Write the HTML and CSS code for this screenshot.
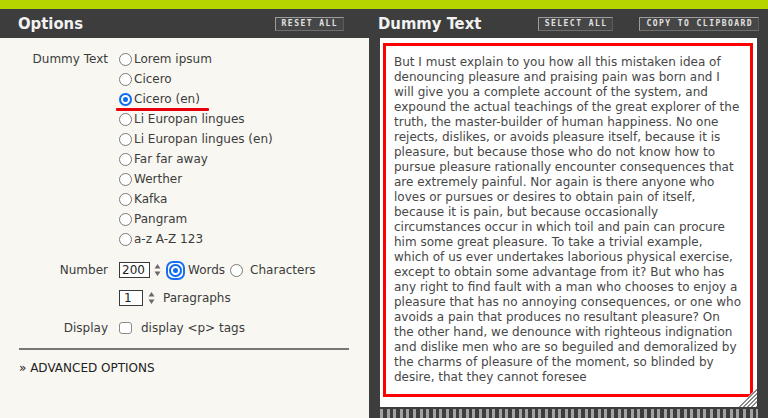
FILE: index.html
```html
<!DOCTYPE html>
<html lang="en">
<head>
<meta charset="utf-8">
<title>Dummy Text Generator</title>
<link rel="stylesheet" href="styles.css">
</head>
<body>
<div class="topbar"></div>
<div class="app">
  <section class="left">
    <header class="bar">
      <h1 class="title">Options</h1>
      <button class="pbtn reset">RESET ALL</button>
    </header>
    <div class="panel">
      <div class="field">
        <div class="lbl">Dummy Text</div>
        <div class="opts">
          <label class="opt"><span class="radio"></span>Lorem ipsum</label>
          <label class="opt"><span class="radio"></span>Cicero</label>
          <label class="opt marked"><span class="radio on"></span>Cicero (en)</label>
          <label class="opt"><span class="radio"></span>Li Europan lingues</label>
          <label class="opt"><span class="radio"></span>Li Europan lingues (en)</label>
          <label class="opt"><span class="radio"></span>Far far away</label>
          <label class="opt"><span class="radio"></span>Werther</label>
          <label class="opt"><span class="radio"></span>Kafka</label>
          <label class="opt"><span class="radio"></span>Pangram</label>
          <label class="opt"><span class="radio"></span>a-z A-Z 123</label>
        </div>
      </div>
      <div class="field num">
        <div class="lbl">Number</div>
        <div class="ctrls">
          <span class="box w3">200</span>
          <svg class="spin" width="7" height="14" viewBox="0 0 7 14"><path d="M3.5 1 L6.5 5.5 H0.5 Z M3.5 13 L6.5 8.5 H0.5 Z" fill="#6a6a6a"/></svg>
          <span class="focus"><span class="radio on"></span></span>
          <span class="t-words">Words</span>
          <span class="radio r-chars"></span>
          <span class="t-chars">Characters</span>
        </div>
      </div>
      <div class="field para">
        <div class="lbl"></div>
        <div class="ctrls">
          <span class="box w1">1</span>
          <svg class="spin sp2" width="7" height="14" viewBox="0 0 7 14"><path d="M3.5 1 L6.5 5.5 H0.5 Z M3.5 13 L6.5 8.5 H0.5 Z" fill="#6a6a6a"/></svg>
          <span class="t-para">Paragraphs</span>
        </div>
      </div>
      <div class="field disp">
        <div class="lbl">Display</div>
        <div class="ctrls">
          <span class="check"></span>
          <span class="t-disp">display &lt;p&gt; tags</span>
        </div>
      </div>
      <hr class="rule">
      <div class="adv">» ADVANCED OPTIONS</div>
    </div>
  </section>
  <section class="right">
    <header class="bar">
      <h1 class="title dt">Dummy Text</h1>
      <div class="btns">
        <button class="pbtn">SELECT ALL</button>
        <button class="pbtn">COPY TO CLIPBOARD</button>
      </div>
    </header>
    <div class="paper">
      <div class="frame">
        <div class="txt">But I must explain to you how all this mistaken idea of<br>denouncing pleasure and praising pain was born and I<br>will give you a complete account of the system, and<br>expound the actual teachings of the great explorer of the<br>truth, the master-builder of human happiness. No one<br>rejects, dislikes, or avoids pleasure itself, because it is<br>pleasure, but because those who do not know how to<br>pursue pleasure rationally encounter consequences that<br>are extremely painful. Nor again is there anyone who<br>loves or pursues or desires to obtain pain of itself,<br>because it is pain, but because occasionally<br>circumstances occur in which toil and pain can procure<br>him some great pleasure. To take a trivial example,<br>which of us ever undertakes laborious physical exercise,<br>except to obtain some advantage from it? But who has<br>any right to find fault with a man who chooses to enjoy a<br>pleasure that has no annoying consequences, or one who<br>avoids a pain that produces no resultant pleasure? On<br>the other hand, we denounce with righteous indignation<br>and dislike men who are so beguiled and demoralized by<br>the charms of pleasure of the moment, so blinded by<br>desire, that they cannot foresee</div>
      </div>
      <span class="grip"></span>
    </div>
    <div class="stripes"></div>
  </section>
</div>
</body>
</html>
```

FILE: styles.css
```css
* { box-sizing: border-box; }
html, body { margin: 0; padding: 0; }
body {
  width: 768px;
  height: 418px;
  overflow: hidden;
  background: #3d3d3d;
  font-family: "DejaVu Sans", Verdana, sans-serif;
  font-size: 12px;
  color: #3c3c3c;
}
.topbar { height: 9px; background: #b5d400; }
.app {
  display: grid;
  grid-template-columns: 370px 1fr;
  height: 409px;
  background: #3d3d3d;
}
.bar {
  height: 29px;
  display: flex;
  align-items: center;
  justify-content: space-between;
}
.title {
  margin: 0;
  font-family: "DejaVu Sans Condensed", "DejaVu Sans", sans-serif;
  font-stretch: condensed;
  font-weight: bold;
  font-size: 16.5px;
  color: #f2f2f2;
  line-height: 29px;
}
.left .bar { padding-left: 18px; padding-right: 25px; width: 369px; }
.pbtn {
  height: 14px;
  padding: 0 5px 0 6px;
  margin: 0;
  font-family: "DejaVu Sans Mono", monospace;
  font-weight: bold;
  font-size: 8px;
  letter-spacing: 1.45px;
  line-height: 12px;
  color: #e2e2e2;
  background: #464646;
  border: 1px solid;
  border-color: #9c9c9c #5c5c5c #6e6e6e #9c9c9c;
  border-radius: 0;
}
.reset { margin-top: 1px; }
.panel {
  width: 369px;
  height: 380px;
  background: #f8f7f2;
  padding-top: 11px;
}
.field {
  display: grid;
  grid-template-columns: 108px auto;
  column-gap: 11px;
}
.lbl { text-align: right; line-height: 20px; }
.opts { display: flex; flex-direction: column; }
.opt {
  display: flex;
  align-items: center;
  height: 20px;
  gap: 2px;
  position: relative;
}
.radio {
  display: inline-block;
  width: 13px;
  height: 13px;
  border-radius: 50%;
  border: 1px solid #7a7a7a;
  background: #fff;
  flex: none;
}
.radio.on {
  border: none;
  background: #0d6cf2;
  box-shadow: inset 0 0 0 2px #0d6cf2, inset 0 0 0 4px #fff;
}
.marked::after {
  content: "";
  position: absolute;
  left: -3px;
  top: 19px;
  width: 93px;
  height: 3px;
  background: #e8000c;
  border-radius: 1px;
}
.ctrls { display: flex; align-items: center; height: 22px; }
.num { margin-top: 10px; }
.num .lbl, .para .lbl { line-height: 22px; }
.box {
  display: inline-block;
  height: 16px;
  border: 1px solid #3a3a3a;
  background: #fff;
  line-height: 14px;
  padding-left: 2px;
  color: #222;
}
.w3 { width: 31px; }
.w1 { width: 24px; padding-left: 4px; }
.spin { margin-left: 4px; flex: none; }
.sp2 { margin-left: 5px; }
.focus {
  display: inline-flex;
  align-items: center;
  justify-content: center;
  width: 19px;
  height: 19px;
  margin-left: 5px;
  border: 2.5px solid #1a6ff0;
  border-radius: 7px;
  background: #fff;
}
.t-words { margin-left: 3px; }
.r-chars { margin-left: 5px; }
.t-chars { margin-left: 7px; }
.para { margin-top: 6px; }
.t-para { margin-left: 8px; }
.disp { margin-top: 9px; }
.disp .ctrls { height: 20px; }
.check {
  width: 13px;
  height: 12px;
  border: 1px solid #8a8a8a;
  border-radius: 3px;
  background: #fff;
}
.t-disp { margin-left: 9px; }
.rule {
  margin: 10px 20px 0 19px;
  border: none;
  height: 2px;
  background: #777;
}
.adv {
  margin: 8px 0 0 19px;
  line-height: 20px;
  color: #222;
}
.right { padding: 0 10px 0 10px; }
.right .bar { padding-right: 0; }
.dt { margin-left: -2px; }
.btns { display: flex; gap: 26px; margin-top: 1px; margin-right: -1px; }
.paper {
  position: relative;
  height: 369px;
  width: 377px;
  background: #fff;
  padding: 5px 4px 0 3px;
}
.frame {
  height: 354px;
  border: 3px solid #ff0000;
  padding: 9px 6px 0 8px;
}
.txt {
  line-height: 15px;
  color: #474747;
  white-space: nowrap;
}
.grip {
  position: absolute;
  right: 0;
  bottom: 0;
  width: 19px;
  height: 19px;
  background: repeating-linear-gradient(135deg, #fff 0 1.5px, #8a8a8a 1.5px 3px);
  clip-path: polygon(100% 0, 100% 100%, 0 100%);
}
.stripes {
  margin-top: 2px;
  width: 378px;
  height: 12px;
  background: repeating-linear-gradient(90deg, #a2a2a2 0 3px, #3d3d3d 3px 6.6px);
}
```
